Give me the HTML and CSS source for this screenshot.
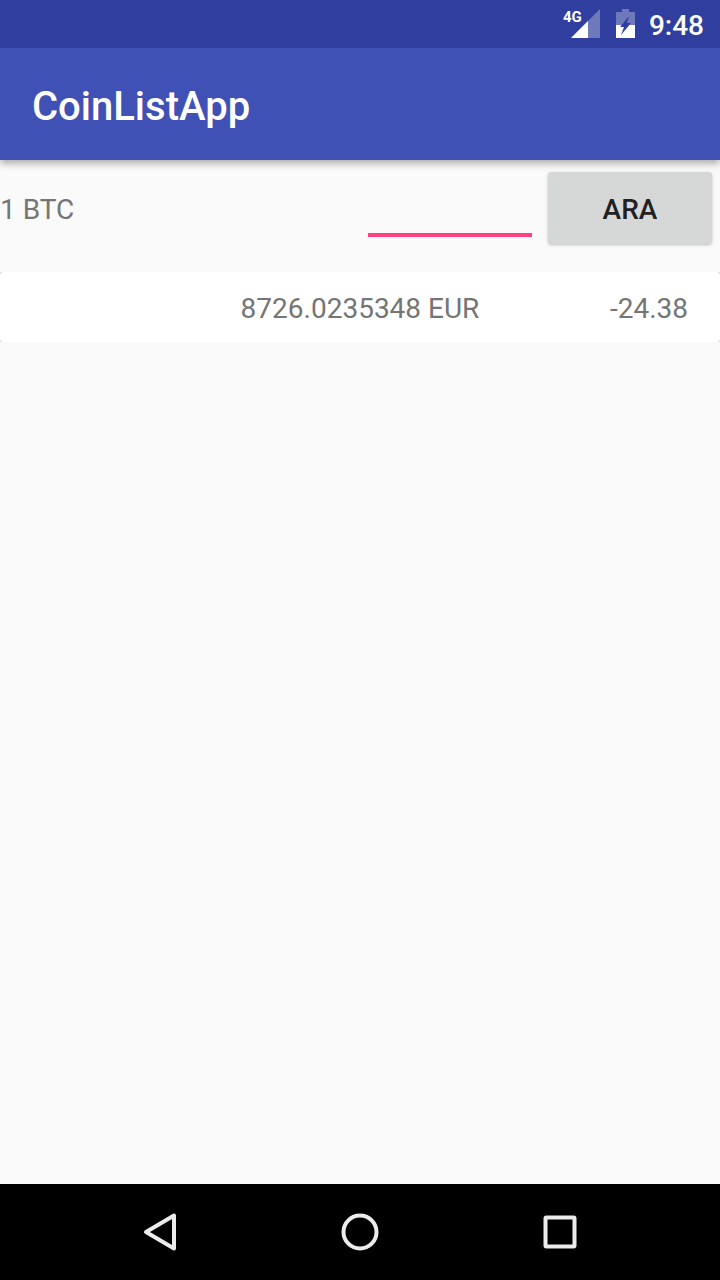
FILE: index.html
```html
<!DOCTYPE html>
<html lang="tr">
<head>
<meta charset="utf-8">
<meta name="viewport" content="width=device-width, initial-scale=1">
<title>CoinListApp</title>
<link rel="stylesheet" href="styles.css">
</head>
<body class="screen">
  <div class="status-bar">
    <div class="signal">
      <svg class="signal-icon" width="29" height="30" viewBox="0 0 29 30" aria-hidden="true">
        <path d="M0 29 29 0V29z" fill="#fff" fill-opacity=".3"/>
        <path d="M0 29 17 12V29z" fill="#fff"/>
      </svg>
      <span class="network">4G</span>
    </div>
    <svg class="battery" width="19" height="30" viewBox="0 0 19 30" aria-hidden="true">
      <path d="M6 0H13V3H19V16H0V3H6z" fill="#fff" fill-opacity=".3"/>
      <path d="M0 16H19V29H0z" fill="#fff"/>
      <path d="M13 7 4 18H8L5 26 15 14H11z" fill="#303f9f"/>
    </svg>
    <time class="clock">9:48</time>
  </div>
  <header class="app-bar">
    <h1 class="title">CoinListApp</h1>
  </header>
  <main class="content">
    <form class="search">
      <label class="search-label" for="amount">1 BTC</label>
      <input class="search-input" id="amount" type="text" autocomplete="off">
      <button class="search-button" type="button">ARA</button>
    </form>
    <ul class="coins">
      <li class="coin">
        <span class="coin-price">8726.0235348 EUR</span>
        <span class="coin-change">-24.38</span>
      </li>
    </ul>
  </main>
  <nav class="nav-bar">
    <button class="nav-button" type="button" aria-label="Back">
      <svg width="40" height="40" viewBox="0 0 40 40" aria-hidden="true"><path d="M34 3.500V36.500L6 20z"/></svg>
    </button>
    <button class="nav-button" type="button" aria-label="Home">
      <svg width="40" height="40" viewBox="0 0 40 40" aria-hidden="true"><circle cx="20" cy="20" r="16.500"/></svg>
    </button>
    <button class="nav-button" type="button" aria-label="Recent apps">
      <svg width="40" height="40" viewBox="0 0 40 40" aria-hidden="true"><rect x="5.500" y="5.500" width="29" height="29" rx="1"/></svg>
    </button>
  </nav>
</body>
</html>
```
FILE: styles.css
```css
* {
  box-sizing: border-box;
}

.screen {
  display: flex;
  flex-direction: column;
  min-height: 100vh;
  margin: 0;
  background: #fafafa;
  color: #757575;
  font: 400 28px/32px Roboto, sans-serif;
}

.status-bar {
  position: relative;
  z-index: 1;
  display: flex;
  align-items: center;
  justify-content: flex-end;
  gap: 14px;
  height: 48px;
  padding: 0 16px;
  background: #303f9f;
  color: #fff;
}

.signal {
  position: relative;
  display: flex;
  padding: 0 2px 0 8px;
}

.signal-icon,
.battery {
  display: block;
}

.network {
  position: absolute;
  top: 0;
  left: 0;
  font-size: 15px;
  font-weight: 700;
  line-height: 16px;
}

.clock {
  padding-top: 3px;
  font-weight: 500;
}

.app-bar {
  display: flex;
  align-items: center;
  height: 112px;
  padding: 6px 32px 0;
  background: #3f51b5;
  box-shadow: 0 3px 8px rgba(0, 0, 0, 0.35);
  color: #fff;
}

.title {
  margin: 0;
  font-size: 40px;
  font-weight: 500;
  line-height: 48px;
}

.content {
  flex: 1;
}

.search {
  display: grid;
  grid-template-columns: 2fr 1fr 1fr;
  align-items: center;
  padding: 12px 0;
}

.search-label {
  padding-top: 3px;
}

.search-input {
  min-width: 0;
  height: 58px;
  margin: 0 8px;
  padding: 0 0 4px;
  border: 0;
  border-bottom: 4px solid #ff4081;
  border-radius: 0;
  outline: 0;
  background: transparent;
  color: #212121;
  font: inherit;
}

.search-button {
  height: 72px;
  margin: 0 8px;
  padding: 4px 0 0;
  border: 0;
  border-radius: 4px;
  background: #d6d7d7;
  box-shadow: 0 1px 3px rgba(0, 0, 0, 0.25);
  color: #212121;
  font: inherit;
  font-weight: 500;
}

.coins {
  margin: 16px 0;
  padding: 0;
  background: #dedede;
  list-style: none;
}

.coin {
  display: grid;
  grid-template-columns: 1fr auto 1fr;
  padding: 21px 32px 17px;
  border-radius: 4px;
  background: #fff;
}

.coin-price {
  grid-column: 2;
}

.coin-change {
  text-align: right;
}

.nav-bar {
  display: flex;
  justify-content: center;
  gap: 20px;
  height: 96px;
  background: #000;
}

.nav-button {
  display: flex;
  align-items: center;
  justify-content: center;
  width: 25%;
  padding: 0;
  border: 0;
  background: none;
}

.nav-button svg {
  fill: none;
  stroke: #ececec;
  stroke-width: 4;
  stroke-linejoin: round;
}
```
